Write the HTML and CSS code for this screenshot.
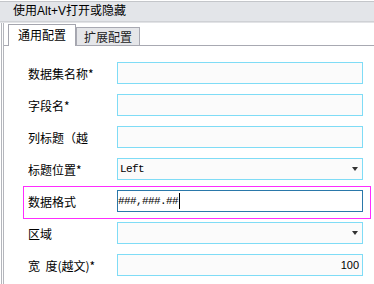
FILE: index.html
```html
<!DOCTYPE html>
<html lang="zh-CN">
<head>
    <meta charset="UTF-8">
    <title>配置</title>
    <link rel="stylesheet" href="styles.css">
</head>
<body>
    <div class="header">使用Alt+V打开或隐藏</div>
    <div class="panel">
        <div class="tabs">
            <div class="tab active">通用配置</div>
            <div class="tab">扩展配置</div>
        </div>
        <div class="form">
            <div class="row">
                <label>数据集名称*</label>
                <div class="field"></div>
            </div>
            <div class="row">
                <label>字段名*</label>
                <div class="field"></div>
            </div>
            <div class="row">
                <label>列标题（越</label>
                <div class="field"></div>
            </div>
            <div class="row">
                <label>标题位置*</label>
                <div class="field select"><span class="mono">Left</span><span class="arrow"></span></div>
            </div>
            <div class="row selected">
                <label>数据格式</label>
                <div class="field focus"><span class="mono">###,###.##</span><span class="caret"></span></div>
            </div>
            <div class="row">
                <label>区域</label>
                <div class="field select"><span></span><span class="arrow"></span></div>
            </div>
            <div class="row">
                <label>宽&nbsp;&nbsp;度(越文)*</label>
                <div class="field number">100</div>
            </div>
        </div>
    </div>
</body>
</html>
```

FILE: styles.css
```css
* {
    margin: 0;
    padding: 0;
    box-sizing: border-box;
}

body {
    background: #fff;
    font-family: "Liberation Sans", "Noto Sans CJK SC", sans-serif;
    font-size: 12px;
    color: #000;
    width: 374px;
    height: 284px;
    overflow: hidden;
}

.header {
    margin-top: 1px;
    height: 21px;
    padding-left: 13px;
    line-height: 19px;
    background: #e3e5e9;
    border-top: 1px solid #c4c6ca;
    border-bottom: 1px solid #cfd1d5;
    box-shadow: 0 1px 0 #e2e3e6;
}

.panel {
    margin-top: 1px;
    margin-left: 1px;
    border-left: 3px double #b4b6bc;
    height: 262px;
}

.tabs {
    display: flex;
    align-items: flex-end;
    height: 23px;
    padding: 1px 0 0 4px;
    border-bottom: 1px solid #a8a9b2;
}

.tab {
    width: 64px;
    height: 18px;
    line-height: 17px;
    text-align: center;
    background: #e5e6e9;
    border: 1px solid #a8a9b2;
    border-bottom: none;
    color: #222;
    font-family: "Noto Sans CJK SC", sans-serif;
}

.tab.active {
    position: relative;
    width: 68px;
    height: 22px;
    margin-bottom: -1px;
    line-height: 20px;
    background: #fff;
    border-color: #a4a5ae;
    color: #000;
    z-index: 1;
}

.form {
    display: flex;
    flex-direction: column;
    gap: 10px;
    padding: 16px 11px 0 24px;
}

.row {
    display: flex;
    align-items: center;
    height: 22px;
}

.row label {
    flex: 0 0 84px;
    height: 17px;
    line-height: 17px;
    margin-right: 5px;
    font-family: "Noto Sans CJK SC", sans-serif;
    white-space: nowrap;
}

.row.selected {
    height: 33px;
    margin: -4px -8px -7px -5px;
    padding: 3px 7px 6px 4px;
    border: 1px solid #ff2cff;
    align-items: flex-start;
}

.row.selected label {
    margin-top: 3px;
}

.field {
    flex: 0 0 246px;
    height: 22px;
    display: flex;
    align-items: center;
    padding: 0 2px;
    background: #fbfbfb;
    border: 1px solid #7fdcf6;
}

.field.focus {
    background: #fff;
    border-color: #2a78aa;
    padding-left: 0;
}

.mono {
    font-family: "Liberation Mono", monospace;
    font-size: 11px;
    letter-spacing: -0.6px;
}

.caret {
    width: 1px;
    height: 16px;
    margin-left: 1px;
    background: #000;
}

.select {
    justify-content: space-between;
    padding-right: 4px;
}

.arrow {
    width: 0;
    height: 0;
    border-left: 3.5px solid transparent;
    border-right: 3.5px solid transparent;
    border-top: 4px solid #333;
}

.number {
    justify-content: flex-end;
    padding-right: 3px;
    font-size: 11px;
}
```
